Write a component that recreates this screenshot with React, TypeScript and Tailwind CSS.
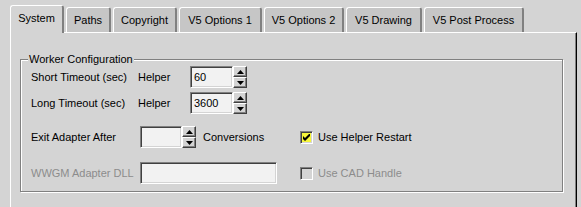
import React from "react"

const tabs = [
  { label: "System", cls: "w-[54px]", active: true },
  { label: "Paths", cls: "w-[45px]", active: false },
  { label: "Copyright", cls: "w-[64px]", active: false },
  { label: "V5 Options 1", cls: "w-[83px]", active: false },
  { label: "V5 Options 2", cls: "w-[80px]", active: false },
  { label: "V5 Drawing", cls: "w-[76px]", active: false },
  { label: "V5 Post Process", cls: "w-[100px]", active: false },
]

function Tab ({ label, cls, active }: { label: string, cls: string, active: boolean }) {
  const base = "flex items-center justify-center rounded-t-[3px] border-t border-l border-white border-r-2 border-r-[#808080] whitespace-nowrap"
  if (active) {
    return (
      <div className={`${base} ${cls} relative z-10 -mb-px h-[28px] bg-[#d4d4d4] pb-[2px]`}>
        {label}
      </div>
    )
  }
  return (
    <div className={`${base} ${cls} h-[25px] bg-[#c6c6c6]`}>
      {label}
    </div>
  )
}

function Arrow ({ down }: { down?: boolean }) {
  return (
    <svg width="7" height="4" viewBox="0 0 7 4">
      {down
        ? <polygon points="0,0 7,0 3.5,4" fill="#000" />
        : <polygon points="0,4 7,4 3.5,0" fill="#000" />}
    </svg>
  )
}

function Spinner () {
  const btn = "h-[11px] flex items-center justify-center bg-[#d4d4d4] border border-t-white border-l-white border-b-[#404040] border-r-[#404040] shadow-[inset_-1px_-1px_0_#808080]"
  return (
    <div className="flex flex-col w-[14px] h-[22px]">
      <div className={btn}><Arrow /></div>
      <div className={btn}><Arrow down /></div>
    </div>
  )
}

function TextBox ({ value, cls }: { value?: string, cls: string }) {
  return (
    <div className={`${cls} h-[22px] flex items-center pl-[3px] bg-[#f2f2f2] border border-t-[#808080] border-l-[#808080] border-b-white border-r-white shadow-[inset_1px_1px_0_#404040,inset_-1px_-1px_0_#d4d4d4]`}>
      {value}
    </div>
  )
}

function CheckBox ({ checked, disabled }: { checked?: boolean, disabled?: boolean }) {
  return (
    <div className={`w-[13px] h-[13px] flex items-center justify-center border border-t-[#808080] border-l-[#808080] border-b-white border-r-white shadow-[inset_1px_1px_0_#404040,inset_-1px_-1px_0_#d4d4d4] ${disabled ? "bg-[#d4d4d4]" : "bg-[#f6f63a]"}`}>
      {checked && (
        <svg width="7" height="7" viewBox="0 0 7 7">
          <polygon points="0,2 2,4 7,-1 7,2 2,7 0,5" fill="#000" />
        </svg>
      )}
    </div>
  )
}

export default function App () {
  return (
    <div className="w-[581px] h-[207px] overflow-hidden bg-[#d4d4d4] text-[11px] leading-[13px] text-black font-['Liberation_Sans',Arial,sans-serif]">
      <div className="flex items-end gap-[2px] pl-[10px] pt-[5px] h-[32px]">
        {tabs.map((t) => <Tab key={t.label} {...t} />)}
      </div>

      <div className="ml-[10px] w-[567px] h-[180px] bg-[#d4d4d4] border-t border-l border-white border-r border-r-black shadow-[inset_-1px_0_0_#808080]">
        <div className="relative ml-[9px] mt-[26px] w-[543px] border border-[#808080] shadow-[1px_1px_0_#fff,inset_1px_1px_0_#fff] pl-[10px] pt-[6px] pb-[7px]">
          <span className="absolute left-[7px] -top-[7px] bg-[#d4d4d4] px-[1px]">Worker Configuration</span>

          <div className="flex items-center h-[22px]">
            <span className="w-[107px]">Short Timeout (sec)</span>
            <span className="w-[52px]">Helper</span>
            <TextBox cls="w-[43px]" value="60" />
            <Spinner />
          </div>

          <div className="flex items-center h-[22px] mt-[4px]">
            <span className="w-[107px]">Long Timeout (sec)</span>
            <span className="w-[52px]">Helper</span>
            <TextBox cls="w-[43px]" value="3600" />
            <Spinner />
          </div>

          <div className="flex items-center h-[22px] mt-[12px]">
            <span className="w-[109px]">Exit Adapter After</span>
            <TextBox cls="w-[42px]" />
            <Spinner />
            <span className="w-[104px] pl-[7px]">Conversions</span>
            <CheckBox checked />
            <span className="ml-[5px]">Use Helper Restart</span>
          </div>

          <div className="flex items-center h-[22px] mt-[14px] text-[#8c8c8c]">
            <span className="w-[109px]">WWGM Adapter DLL</span>
            <TextBox cls="w-[137px]" />
            <div className="ml-[23px]"><CheckBox disabled /></div>
            <span className="ml-[5px]">Use CAD Handle</span>
          </div>
        </div>
      </div>
    </div>
  )
}
